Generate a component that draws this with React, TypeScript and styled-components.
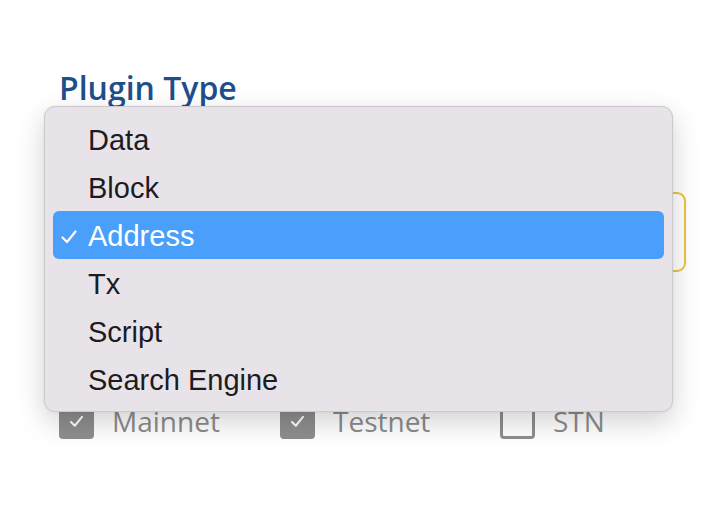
import React from 'react';
import styled, { createGlobalStyle } from 'styled-components';

const GlobalStyle = createGlobalStyle`
  html, body {
    margin: 0;
    padding: 0;
    background: #ffffff;
  }
  body {
    font-family: "Open Sans", "DejaVu Sans", sans-serif;
  }
`;

const Page = styled.div`
  width: 720px;
  height: 520px;
  box-sizing: border-box;
  padding: 65px 34px 0 58px;
  overflow: hidden;
`;

const Heading = styled.h2`
  margin: 0 0 0 1px;
  font-family: "Open Sans", sans-serif;
  font-size: 32px;
  font-weight: 600;
  line-height: 46px;
  color: #1f4f8b;
`;

const FieldWrap = styled.div`
  position: relative;
  margin-top: 81px;
`;

const SelectBox = styled.div`
  height: 80px;
  box-sizing: border-box;
  border: 2px solid #f0c33c;
  border-radius: 9px;
  background: #fff;
`;

const Menu = styled.ul`
  position: absolute;
  top: -86px;
  left: -14px;
  width: 629px;
  box-sizing: border-box;
  margin: 0;
  padding: 8px 8px;
  list-style: none;
  background: #e8e3e9;
  border: 1px solid #cdc9cf;
  border-radius: 11px;
  box-shadow: 0 10px 28px rgba(0, 0, 0, 0.18), 0 0 2px rgba(0, 0, 0, 0.08);
  z-index: 10;
`;

const Item = styled.li<{ $active?: boolean }>`
  position: relative;
  height: 48px;
  display: flex;
  align-items: center;
  padding-left: 35px;
  padding-top: 3px;
  box-sizing: border-box;
  border-radius: 6px;
  font-family: "Liberation Sans", Arial, sans-serif;
  font-size: 29px;
  color: ${(p) => (p.$active ? '#ffffff' : '#1c1c1e')};
  background: ${(p) => (p.$active ? '#4a9ffa' : 'transparent')};
`;

const Check = styled.span`
  position: absolute;
  left: 6px;
  top: 2px;
  height: 48px;
  display: flex;
  align-items: center;
`;

const Row = styled.div`
  display: grid;
  grid-template-columns: 221px 220px 1fr;
  margin-top: 130px;
  margin-left: 1px;
`;

const Option = styled.label`
  display: flex;
  align-items: center;
  gap: 18px;
  font-family: "Open Sans", sans-serif;
  font-size: 28px;
  font-weight: 500;
  color: #8c8c8c;
`;

const Box = styled.span<{ $checked?: boolean }>`
  width: 35px;
  height: 35px;
  box-sizing: border-box;
  border-radius: 4px;
  border: 3px solid #8e8e8e;
  background: ${(p) => (p.$checked ? '#8e8e8e' : '#fff')};
  display: flex;
  align-items: center;
  justify-content: center;
`;

const options = ['Data', 'Block', 'Address', 'Tx', 'Script', 'Search Engine'];
const networks = [
  { name: 'Mainnet', checked: true },
  { name: 'Testnet', checked: true },
  { name: 'STN', checked: false },
];

function Tick({ color, size, weight }: { color: string; size: number; weight: number }) {
  return (
    <svg width={size} height={size} viewBox="0 0 20 20" fill="none">
      <path d="M3.5 10.5 L8 15 L16.5 4.5" stroke={color} strokeWidth={weight} strokeLinecap="round" strokeLinejoin="round" />
    </svg>
  );
}

export default function App() {
  const selected = 'Address';
  return (
    <Page>
      <GlobalStyle />
      <Heading>Plugin Type</Heading>
      <FieldWrap>
        <SelectBox />
        <Menu>
          {options.map((o) => (
            <Item key={o} $active={o === selected}>
              {o === selected && (
                <Check>
                  <Tick color="#fff" size={20} weight={2.2} />
                </Check>
              )}
              {o}
            </Item>
          ))}
        </Menu>
      </FieldWrap>
      <Row>
        {networks.map((n) => (
          <Option key={n.name}>
            <Box $checked={n.checked}>{n.checked && <Tick color="#fff" size={17} weight={2.4} />}</Box>
            {n.name}
          </Option>
        ))}
      </Row>
    </Page>
  );
}
